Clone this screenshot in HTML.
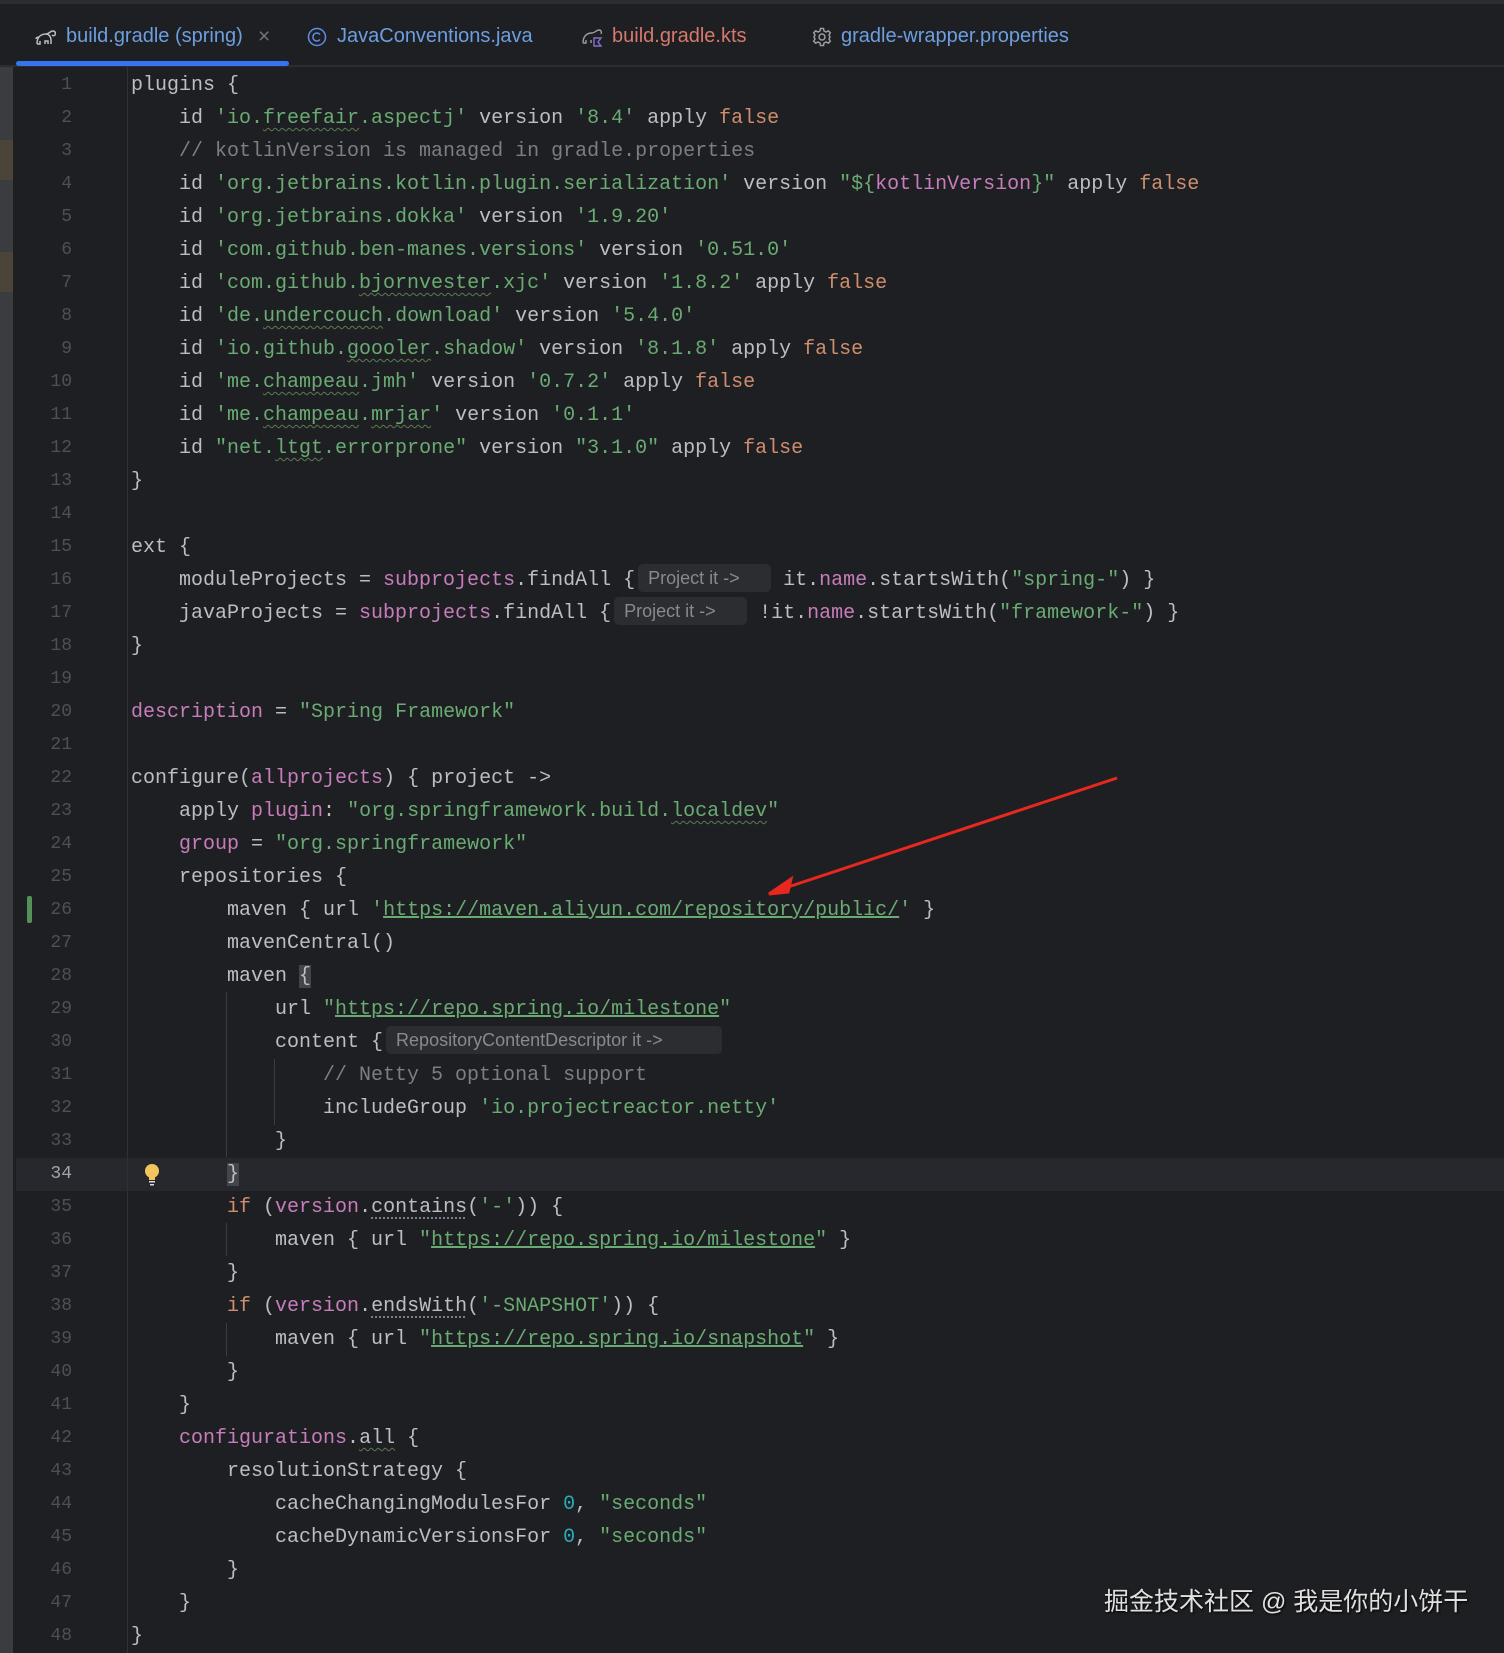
<!DOCTYPE html>
<html><head><meta charset="utf-8"><style>
*{margin:0;padding:0;box-sizing:border-box}
body{width:1504px;height:1653px;background:#1e1f22;overflow:hidden;position:relative;font-family:"Liberation Mono",monospace}
.top{position:absolute;left:0;top:0;width:1504px;height:4px;background:#2b2d30}
.tabs{position:absolute;left:0;top:4px;width:1504px;height:63px;border-bottom:2px solid #2b2d30}
.tab{position:absolute;top:25px;font:20px "Liberation Sans",sans-serif;white-space:nowrap}
.uline{position:absolute;left:16px;top:61px;width:273px;height:5px;background:#3574f0;border-radius:3px}
.strip{position:absolute;left:0;top:67px;width:13px;height:1586px;background:#3a3c40}
.sep{position:absolute;left:127px;top:67px;width:1px;height:1586px;background:#2f3134}
.ln{position:absolute;left:0;width:72px;text-align:right;color:#4b5059;font-size:18px;line-height:33px}
.cl{position:absolute;left:131px;white-space:pre;color:#bcbec4;font-size:20px;line-height:33px}
.k{color:#cf8e6d}.s{color:#6aab73}.p{color:#c77dbb}.c{color:#7a7e85}.n{color:#2aacb8}
.u{text-decoration:underline;text-decoration-color:#6aab73}
.w{text-decoration:underline wavy #5c7a52;text-decoration-thickness:1px;text-underline-offset:4px}
.d{text-decoration:underline dotted #7a7e85;text-underline-offset:5px}
.h{display:inline-block;font:18px "Liberation Sans",sans-serif;color:#868a91;background:#2b2d30;border-radius:5px;padding:0 10px;line-height:28px;vertical-align:1px}
.g{position:absolute;width:1px;background:#3a3c40}
.bx{background:#43454a}
</style></head><body>
<div class="top"></div>
<div class="tabs"></div>
<svg style="position:absolute;left:34px;top:27px" width="24" height="20" viewBox="0 0 24 20" fill="none" stroke="#bcbec4" stroke-width="1.5"><path d="M3 17c0-6 3-10 9-10 3 0 4-3 7-3 2 0 3 2 2 4-1 1-2 1-3 0M12 7c3 0 5 3 5 6v4M3 17h3v-3M11 17v-3h3v3M5 10c-2 0-3 1-3 2"/></svg>
<div class="tab" style="left:66px;color:#6c9fe0">build.gradle (spring)</div>
<div class="tab" style="left:258px;color:#6f737a;font-size:21px">×</div>
<svg style="position:absolute;left:307px;top:27px" width="20" height="20" viewBox="0 0 20 20" fill="none" stroke="#5b8ee0" stroke-width="1.5"><circle cx="10" cy="10" r="8.5"/><path d="M13 7.5a4 4 0 1 0 0 5"/></svg>
<div class="tab" style="left:337px;color:#6c9fe0">JavaConventions.java</div>
<svg style="position:absolute;left:580px;top:26px" width="24" height="22" viewBox="0 0 24 22" fill="none" stroke="#9a9ca1" stroke-width="1.4"><path d="M3 17c0-6 3-10 9-10 3 0 4-3 7-3 2 0 3 2 2 4M3 17h3v-3M11 17v-3"/><path d="M14 12h7l-3 4 3 4h-7z" stroke="#8a6fd0"/></svg>
<div class="tab" style="left:612px;color:#d6796b">build.gradle.kts</div>
<svg style="position:absolute;left:812px;top:27px" width="20" height="20" viewBox="0 0 20 20" fill="none" stroke="#9a9ca1" stroke-width="1.5"><circle cx="10" cy="10" r="3"/><path d="M8.5 1.5h3l.5 2.5 2 1 2.3-1.2 2 2L17 8l1 2-1 2 1.3 2.2-2 2-2.3-1.2-2 1-.5 2.5h-3l-.5-2.5-2-1-2.3 1.2-2-2L3 12l-1-2 1-2-1.3-2.2 2-2L6 5l2-1z"/></svg>
<div class="tab" style="left:841px;color:#6c9fe0">gradle-wrapper.properties</div>
<div class="uline"></div>
<div class="strip"></div>
<div style="position:absolute;left:0;top:140px;width:13px;height:40px;background:#5a4a35;opacity:.6"></div>
<div style="position:absolute;left:0;top:252px;width:13px;height:40px;background:#5a4a35;opacity:.6"></div>
<div style="position:absolute;left:16px;top:1158px;width:1488px;height:33px;background:#26282e"></div>
<div class="sep"></div>
<div style="position:absolute;left:27px;top:896px;width:5px;height:27px;background:#549159;border-radius:2px"></div>
<svg style="position:absolute;left:144px;top:1163px" width="16" height="24" viewBox="0 0 16 24"><circle cx="8" cy="8" r="7" fill="#f2c55c"/><rect x="5" y="13" width="6" height="4" fill="#f2c55c"/><rect x="5" y="18" width="6" height="1.5" fill="#ddd"/><rect x="6" y="21" width="4" height="1.5" fill="#ddd"/></svg>
<div class="g" style="left:226px;top:992px;height:165px"></div>
<div class="g" style="left:274px;top:1059px;height:66px"></div>
<div class="g" style="left:226px;top:1223px;height:33px"></div>
<div class="g" style="left:226px;top:1323px;height:33px"></div>
<div id="L"></div>
<script>
const lines=[
'plugins {',
'    id <span class="s">\'io.<span class="w">freefair</span>.aspectj\'</span> version <span class="s">\'8.4\'</span> apply <span class="k">false</span>',
'    <span class="c">// kotlinVersion is managed in gradle.properties</span>',
'    id <span class="s">\'org.jetbrains.kotlin.plugin.serialization\'</span> version <span class="s">"${</span><span class="p">kotlinVersion</span><span class="s">}"</span> apply <span class="k">false</span>',
'    id <span class="s">\'org.jetbrains.dokka\'</span> version <span class="s">\'1.9.20\'</span>',
'    id <span class="s">\'com.github.ben-manes.versions\'</span> version <span class="s">\'0.51.0\'</span>',
'    id <span class="s">\'com.github.<span class="w">bjornvester</span>.xjc\'</span> version <span class="s">\'1.8.2\'</span> apply <span class="k">false</span>',
'    id <span class="s">\'de.<span class="w">undercouch</span>.download\'</span> version <span class="s">\'5.4.0\'</span>',
'    id <span class="s">\'io.github.<span class="w">goooler</span>.shadow\'</span> version <span class="s">\'8.1.8\'</span> apply <span class="k">false</span>',
'    id <span class="s">\'me.<span class="w">champeau</span>.jmh\'</span> version <span class="s">\'0.7.2\'</span> apply <span class="k">false</span>',
'    id <span class="s">\'me.<span class="w">champeau</span>.<span class="w">mrjar</span>\'</span> version <span class="s">\'0.1.1\'</span>',
'    id <span class="s">"net.<span class="w">ltgt</span>.errorprone"</span> version <span class="s">"3.1.0"</span> apply <span class="k">false</span>',
'}','',
'ext {',
'    moduleProjects = <span class="p">subprojects</span>.findAll {<span class="h" style="margin-left:3px;width:133px">Project it -&gt;</span> it.<span class="p">name</span>.startsWith(<span class="s">"spring-"</span>) }',
'    javaProjects = <span class="p">subprojects</span>.findAll {<span class="h" style="margin-left:3px;width:133px">Project it -&gt;</span> !it.<span class="p">name</span>.startsWith(<span class="s">"framework-"</span>) }',
'}','',
'<span class="p">description</span> = <span class="s">"Spring Framework"</span>','',
'configure(<span class="p">allprojects</span>) { project -&gt;',
'    apply <span class="p">plugin</span>: <span class="s">"org.springframework.build.<span class="w">localdev</span>"</span>',
'    <span class="p">group</span> = <span class="s">"org.springframework"</span>',
'    repositories {',
'        maven { url <span class="s">\'<span class="u">https://maven.aliyun.com/repository/public/</span>\'</span> }',
'        mavenCentral()',
'        maven <span class="bx">{</span>',
'            url <span class="s">"<span class="u">https://repo.spring.io/milestone</span>"</span>',
'            content {<span class="h" style="margin-left:3px;width:336px">RepositoryContentDescriptor it -&gt;</span>',
'                <span class="c">// Netty 5 optional support</span>',
'                includeGroup <span class="s">\'io.projectreactor.netty\'</span>',
'            }',
'        <span class="bx">}</span>',
'        <span class="k">if</span> (<span class="p">version</span>.<span class="d">contains</span>(<span class="s">\'-\'</span>)) {',
'            maven { url <span class="s">"<span class="u">https://repo.spring.io/milestone</span>"</span> }',
'        }',
'        <span class="k">if</span> (<span class="p">version</span>.<span class="d">endsWith</span>(<span class="s">\'-SNAPSHOT\'</span>)) {',
'            maven { url <span class="s">"<span class="u">https://repo.spring.io/snapshot</span>"</span> }',
'        }',
'    }',
'    <span class="p">configurations</span>.<span class="w">all</span> {',
'        resolutionStrategy {',
'            cacheChangingModulesFor <span class="n">0</span>, <span class="s">"seconds"</span>',
'            cacheDynamicVersionsFor <span class="n">0</span>, <span class="s">"seconds"</span>',
'        }',
'    }',
'}'];
let h='';
lines.forEach((l,i)=>{const t=69+i*33;
h+=`<div class="ln" style="top:${t}px;${i==33?'color:#a1a3ab':''}">${i+1}</div><div class="cl" style="top:${t}px">${l}</div>`;});
document.getElementById('L').innerHTML=h;
</script>
<svg style="position:absolute;left:0;top:0" width="1504" height="1653"><line x1="1117" y1="778" x2="785" y2="888" stroke="#e8281f" stroke-width="3"/><path d="M769 894l22-15-3 13z" fill="#e8281f" stroke="#e8281f" stroke-width="3"/></svg>
<div style="position:absolute;left:1104px;top:1582px;font:25px 'Liberation Sans','Noto Sans CJK SC',sans-serif;color:#e0e0e0;text-shadow:1px 1px 2px #000;white-space:nowrap">掘金技术社区 @ 我是你的小饼干</div>
</body></html>
